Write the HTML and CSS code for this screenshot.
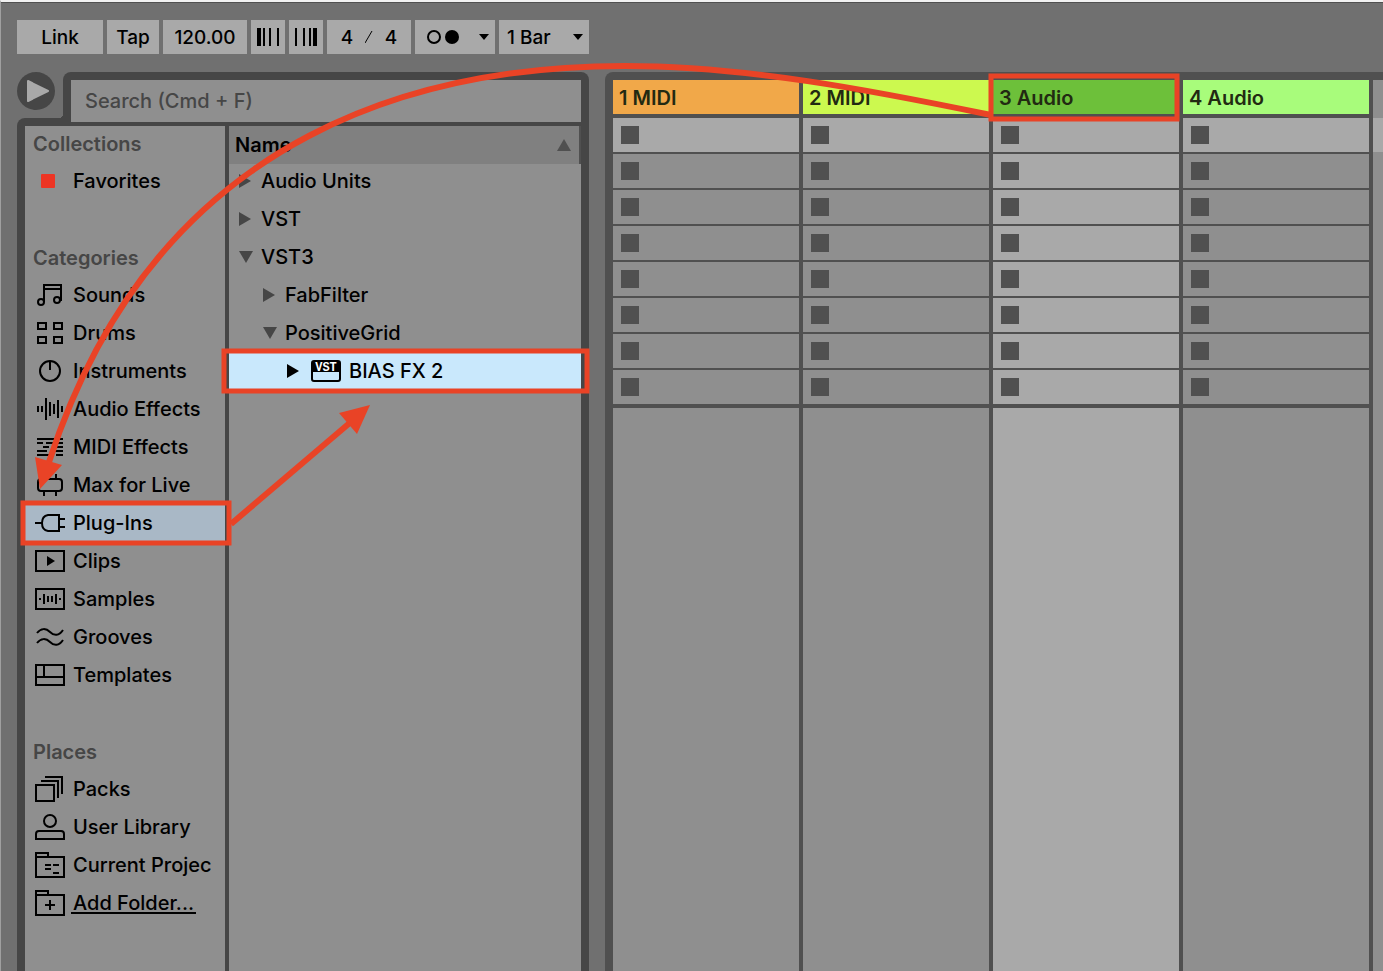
FILE: index.html
```html
<!DOCTYPE html>
<html lang="en">
<head>
    <meta charset="UTF-8">
    <meta name="viewport" content="width=device-width, initial-scale=1.0">
    <title>Live Set</title>
    <link rel="stylesheet" href="styles.css">
</head>
<body>
    <header class="toolbar">
        <button type="button" class="link-btn">Link</button>
        <button type="button" class="tap-btn">Tap</button>
        <input type="text" class="tempo" value="120.00" aria-label="Tempo">
        <button type="button" class="nudge" aria-label="Nudge down">
            <svg width="24" height="18"><path d="M1 0h4v18H1zM7 0h2v18H7zM13 0h2v18h-2zM21 0h2v18h-2z"/></svg>
        </button>
        <button type="button" class="nudge" aria-label="Nudge up">
            <svg width="24" height="18"><path d="M1 0h2v18H1zM9 0h2v18H9zM15 0h2v18h-2zM19 0h4v18h-4z"/></svg>
        </button>
        <div class="signature">
            <input type="text" value="4" aria-label="Beats">
            <svg width="8" height="12"><path d="M0 12L7 0" class="line"/></svg>
            <input type="text" value="4" aria-label="Note value">
        </div>
        <button type="button" class="metronome" aria-label="Metronome" aria-haspopup="true">
            <svg width="34" height="16"><circle cx="8" cy="8" r="6" class="line"/><circle cx="26" cy="8" r="7"/></svg>
            <svg width="10" height="6"><path d="M0 0h10L5 6z"/></svg>
        </button>
        <div class="quantize">
            <select aria-label="Quantization"><option>1 Bar</option></select>
            <svg width="10" height="6"><path d="M0 0h10L5 6z"/></svg>
        </div>
    </header>

    <main class="workspace">
        <section class="browser">
            <div class="browser-top">
                <button type="button" class="play" aria-label="Preview">
                    <svg width="38" height="38"><path d="M11 9L31 19L11 29z"/></svg>
                </button>
                <div class="search">
                    <input type="search" placeholder="Search (Cmd + F)" aria-label="Search">
                </div>
            </div>

            <div class="browser-body">
                <nav class="sidebar">
                    <h2>Collections</h2>
                    <a href="#"><svg class="icon"><rect x="6" y="8" width="14" height="14" rx="1" class="fav"/></svg>Favorites</a>

                    <h2 class="spaced">Categories</h2>
                    <a href="#"><svg class="icon"><path d="M9 22V5h17v16M9 9h17"/><circle cx="6" cy="22" r="3"/><circle cx="22" cy="20" r="3"/></svg>Sounds</a>
                    <a href="#"><svg class="icon"><path d="M3 5h8v6H3zM19 5h8v6h-8zM3 19h8v6H3zM19 19h8v6h-8z"/></svg>Drums</a>
                    <a href="#"><svg class="icon"><circle cx="15" cy="15" r="10"/><path d="M15 5v9"/></svg>Instruments</a>
                    <a href="#"><svg class="icon"><path d="M3 12v6M7 12v6M11 4v22M15 8v14M19 10v10M23 6v18M27 12v6"/></svg>Audio Effects</a>
                    <a href="#"><svg class="icon"><path d="M2 7h26M2 11h6M11 11h17M8 15h6M17 15h11M2 19h10M17 19h11M2 23h17M21 23h7"/></svg>MIDI Effects</a>
                    <a href="#"><svg class="icon"><rect x="3" y="9" width="24" height="12" rx="3"/><path d="M9 4v5M21 4v5M9 21v5M21 21v5"/></svg>Max for Live</a>
                    <a href="#" class="active"><svg class="icon"><path d="M0 15h7M24 7H13Q7 8 7 15Q7 22 13 23H24zM24 11h6M24 19h6"/></svg>Plug-Ins</a>
                    <a href="#"><svg class="icon"><path d="M1 5h28v20H1z"/><path d="M12 10l8 5l-8 5z" class="solid"/></svg>Clips</a>
                    <a href="#"><svg class="icon"><path d="M1 5h28v20H1zM5 14v2M9 10v10M13 12v6M17 12v6M21 10v10M25 14v2"/></svg>Samples</a>
                    <a href="#"><svg class="icon"><path d="M2 11C6 6 11 6 15 10S24 14 28 8M2 21C6 16 11 16 15 20S24 24 28 18"/></svg>Grooves</a>
                    <a href="#"><svg class="icon"><path d="M1 5h28v20H1zM1 17h28M9 5v12"/></svg>Templates</a>

                    <h2 class="spaced">Places</h2>
                    <a href="#"><svg class="icon"><path d="M1 11h18v16H1zM6 7h17v17M10 3h17v17"/></svg>Packs</a>
                    <a href="#"><svg class="icon"><circle cx="15" cy="9" r="6"/><path d="M1 27V22Q1 19 4 19H26Q29 19 29 22V27z"/></svg>User Library</a>
                    <a href="#"><svg class="icon"><path d="M1 7h28v20H1zM1 7V3h12v4M10 15h6M10 19h6M18 15h6M18 23h6"/></svg>Current Projec</a>
                    <a href="#" class="add"><svg class="icon"><path d="M1 7h28v20H1zM1 7V3h12v4M10 17h10M15 12v10"/></svg><span>Add Folder...</span></a>
                </nav>

                <div class="content">
                    <button type="button" class="content-head">Name
                        <svg width="14" height="12"><path d="M7 0l7 12H0z"/></svg>
                    </button>
                    <ul class="tree">
                        <li><button type="button"><svg class="arrow"><path d="M0 0l12 7L0 14z"/></svg>Audio Units</button></li>
                        <li><button type="button"><svg class="arrow"><path d="M0 0l12 7L0 14z"/></svg>VST</button></li>
                        <li><button type="button"><svg class="arrow"><path d="M0 1h14L7 13z"/></svg>VST3</button>
                            <ul>
                                <li><button type="button"><svg class="arrow"><path d="M0 0l12 7L0 14z"/></svg>FabFilter</button></li>
                                <li><button type="button"><svg class="arrow"><path d="M0 1h14L7 13z"/></svg>PositiveGrid</button>
                                    <ul>
                                        <li><button type="button" class="selected"><svg class="arrow"><path d="M0 0l12 7L0 14z"/></svg><svg class="icon device"><rect x="1" y="5" width="28" height="20" rx="2"/><path d="M1 5h28v11H1z" class="solid"/><text x="15" y="15">VST</text></svg>BIAS FX 2</button></li>
                                    </ul>
                                </li>
                            </ul>
                        </li>
                    </ul>
                </div>
            </div>
        </section>

        <section class="session">
            <div class="track">
                <h3 class="orange">1 MIDI</h3>
                <div class="slots">
                    <button type="button" aria-label="Stop"></button>
                    <button type="button" aria-label="Stop"></button>
                    <button type="button" aria-label="Stop"></button>
                    <button type="button" aria-label="Stop"></button>
                    <button type="button" aria-label="Stop"></button>
                    <button type="button" aria-label="Stop"></button>
                    <button type="button" aria-label="Stop"></button>
                    <button type="button" aria-label="Stop"></button>
                </div>
                <div class="rest"></div>
            </div>
            <div class="track">
                <h3 class="yellow">2 MIDI</h3>
                <div class="slots">
                    <button type="button" aria-label="Stop"></button>
                    <button type="button" aria-label="Stop"></button>
                    <button type="button" aria-label="Stop"></button>
                    <button type="button" aria-label="Stop"></button>
                    <button type="button" aria-label="Stop"></button>
                    <button type="button" aria-label="Stop"></button>
                    <button type="button" aria-label="Stop"></button>
                    <button type="button" aria-label="Stop"></button>
                </div>
                <div class="rest"></div>
            </div>
            <div class="track current">
                <h3 class="green">3 Audio</h3>
                <div class="slots">
                    <button type="button" aria-label="Stop"></button>
                    <button type="button" aria-label="Stop"></button>
                    <button type="button" aria-label="Stop"></button>
                    <button type="button" aria-label="Stop"></button>
                    <button type="button" aria-label="Stop"></button>
                    <button type="button" aria-label="Stop"></button>
                    <button type="button" aria-label="Stop"></button>
                    <button type="button" aria-label="Stop"></button>
                </div>
                <div class="rest"></div>
            </div>
            <div class="track">
                <h3 class="lime">4 Audio</h3>
                <div class="slots">
                    <button type="button" aria-label="Stop"></button>
                    <button type="button" aria-label="Stop"></button>
                    <button type="button" aria-label="Stop"></button>
                    <button type="button" aria-label="Stop"></button>
                    <button type="button" aria-label="Stop"></button>
                    <button type="button" aria-label="Stop"></button>
                    <button type="button" aria-label="Stop"></button>
                    <button type="button" aria-label="Stop"></button>
                </div>
                <div class="rest"></div>
            </div>
            <div class="drop-area"><div class="scene"></div></div>
        </section>
    </main>

    <!-- red callouts over the interface -->
    <svg class="callouts" width="1200" height="560">
        <rect x="991" y="76" width="186" height="43"/>
        <rect x="23" y="503" width="206" height="40"/>
        <rect x="224" y="351" width="363" height="40"/>
        <path d="M991 115C870 90 745 66 625 66C440 66 160 120 49 462" class="curve"/>
        <path d="M231 524L352 421" class="curve"/>
        <path d="M35 457L62 465L40 489z" class="head"/>
        <path d="M370 405L339 413L357 434z" class="head"/>
    </svg>
</body>
</html>
```
FILE: styles.css
```css
* {
    box-sizing: border-box;
}

body {
    margin: 0;
    min-height: 100vh;
    display: flex;
    flex-direction: column;
    position: relative;
    overflow-x: hidden;
    background-color: #707070;
    border-top: 2px solid #f1f1f1;
    border-left: 1px solid #a0a0a0;
    box-shadow: inset 0 1px 0 #505050;
    font-family: Inter, "Liberation Sans", sans-serif;
    font-size: 20px;
    font-weight: 500;
    color: #000;
}

button,
input,
select {
    font: inherit;
    color: inherit;
    border: none;
    border-radius: 0;
    margin: 0;
    padding: 0;
    background: none;
}

/* toolbar */
.toolbar {
    display: flex;
    gap: 4px;
    padding: 18px 16px;
    font-size: 19px;
}

.toolbar > * {
    height: 34px;
    background-color: #a9a9a9;
}

.toolbar .line {
    fill: none;
    stroke: #000;
    stroke-width: 2;
}

.link-btn {
    width: 86px;
}

.tap-btn {
    width: 52px;
}

.tempo {
    width: 84px;
    text-align: center;
}

.nudge {
    width: 34px;
    display: flex;
    align-items: center;
    justify-content: center;
}

.signature {
    width: 84px;
    display: flex;
    align-items: center;
    justify-content: center;
    gap: 8px;
}

.signature input {
    width: 20px;
    text-align: center;
}

.signature .line {
    stroke-width: 1;
}

.metronome {
    width: 80px;
    display: flex;
    align-items: center;
    justify-content: space-between;
    padding: 0 6px 0 11px;
}

.quantize {
    width: 90px;
    position: relative;
}

.quantize select {
    width: 100%;
    height: 100%;
    padding-left: 8px;
    appearance: none;
}

.quantize svg {
    position: absolute;
    right: 6px;
    top: 14px;
    pointer-events: none;
}

/* browser */
.workspace {
    flex: 1;
    display: flex;
    gap: 16px;
    padding-left: 16px;
}

.browser {
    flex: 0 0 572px;
    display: flex;
    flex-direction: column;
}

.browser-top {
    display: flex;
    gap: 8px;
    height: 46px;
}

.play {
    width: 38px;
    height: 38px;
    border-radius: 50%;
    background-color: #464646;
}

.play svg {
    display: block;
    fill: #a9a9a9;
    stroke: #a9a9a9;
    stroke-width: 2;
    stroke-linejoin: round;
}

.search {
    flex: 1;
    position: relative;
    padding: 8px 8px 0;
    border-radius: 8px 8px 0 0;
    background-color: #464646;
}

.search::before {
    content: "";
    position: absolute;
    left: -4px;
    bottom: 0;
    width: 4px;
    height: 4px;
    background: radial-gradient(circle at 0 0, transparent 4px, #464646 4px);
}

.search input {
    display: block;
    position: relative;
    width: 100%;
    height: 42px;
    padding: 0 14px;
    background-color: #8f8f8f;
    appearance: none;
}

.search input::placeholder {
    color: #464646;
    opacity: 1;
}

.browser-body {
    flex: 1;
    display: flex;
    gap: 4px;
    padding: 8px 8px 0;
    border-radius: 8px 0 0 0;
    background-color: #464646;
}

.sidebar {
    width: 200px;
    background-color: #8f8f8f;
}

.sidebar h2 {
    margin: 0;
    padding: 0 8px;
    font-size: 20px;
    font-weight: 600;
    line-height: 36px;
    color: #464646;
}

.sidebar h2.spaced {
    padding-top: 40px;
}

.sidebar a {
    display: flex;
    align-items: center;
    gap: 8px;
    height: 38px;
    padding-left: 10px;
    color: #000;
    text-decoration: none;
    white-space: nowrap;
    overflow: hidden;
}

.sidebar .active {
    background-color: #a9b8c6;
}

.sidebar .add span {
    margin-left: -2px;
    padding: 2px 2px 0;
    line-height: 18px;
    border-bottom: 2px solid #000;
}

.icon {
    flex: none;
    width: 30px;
    height: 30px;
    fill: none;
    stroke: #000;
    stroke-width: 2;
}

.icon .fav {
    fill: #ed3524;
    stroke: none;
}

.icon .solid {
    fill: #000;
    stroke: none;
}

.content {
    flex: 1;
    background-color: #8f8f8f;
}

.content-head {
    display: flex;
    align-items: center;
    justify-content: space-between;
    width: 100%;
    height: 38px;
    margin-bottom: -2px;
    padding: 0 8px 0 6px;
    border-right: 2px solid #505050;
    background-color: #808080;
    font-weight: 600;
}

.content-head svg {
    fill: #505050;
}

.tree,
.tree ul {
    list-style: none;
    margin: 0;
    padding: 0;
}

.tree button {
    display: flex;
    align-items: center;
    gap: 10px;
    width: 100%;
    height: 38px;
    padding-left: 10px;
}

.tree ul button {
    padding-left: 34px;
}

.tree ul ul button {
    padding-left: 58px;
}

.tree .selected {
    background-color: #c9e8fc;
}

.arrow {
    flex: none;
    width: 12px;
    height: 14px;
    overflow: visible;
    fill: #464646;
}

.selected .arrow {
    fill: #000;
}

.device {
    margin: 0 -2px 0 2px;
}

.device text {
    fill: #fff;
    stroke: none;
    font: bold 12px "Liberation Mono", monospace;
    text-anchor: middle;
}

/* session view */
.session {
    flex: 1;
    display: flex;
    gap: 4px;
    min-width: 0;
    overflow: hidden;
    padding: 8px 0 0 8px;
    border-radius: 8px 0 0 0;
    background-color: #505050;
}

.track {
    flex: 0 0 186px;
    display: flex;
    flex-direction: column;
    gap: 4px;
}

.track h3 {
    margin: 0;
    padding: 2px 0 0 6px;
    font-size: 20px;
    font-weight: 600;
    line-height: 32px;
    color: #222a12;
}

.orange {
    background-color: #f1a849;
}

.yellow {
    background-color: #ccf94f;
}

.green {
    background-color: #6dc03a;
}

.lime {
    background-color: #a8fc7b;
}

.slots {
    display: flex;
    flex-direction: column;
    gap: 2px;
}

.slots button {
    height: 34px;
    padding: 8px;
    background-color: #8f8f8f;
}

.slots button::before {
    content: "";
    display: block;
    width: 18px;
    height: 18px;
    background-color: #505050;
}

.rest {
    flex: 1;
    background-color: #8f8f8f;
}

.slots button:first-child,
.current .slots button,
.current .rest {
    background-color: #a9a9a9;
}

.drop-area {
    flex: 1;
    padding-top: 38px;
    background-color: #8f8f8f;
}

.scene {
    height: 34px;
    background-color: #a9a9a9;
}

/* callouts */
.callouts {
    position: absolute;
    left: -1px;
    top: -2px;
    fill: none;
    stroke: #e94326;
    stroke-width: 5;
    pointer-events: none;
}

.callouts .curve {
    stroke-width: 6;
}

.callouts .head {
    fill: #e94326;
    stroke: none;
}
```
